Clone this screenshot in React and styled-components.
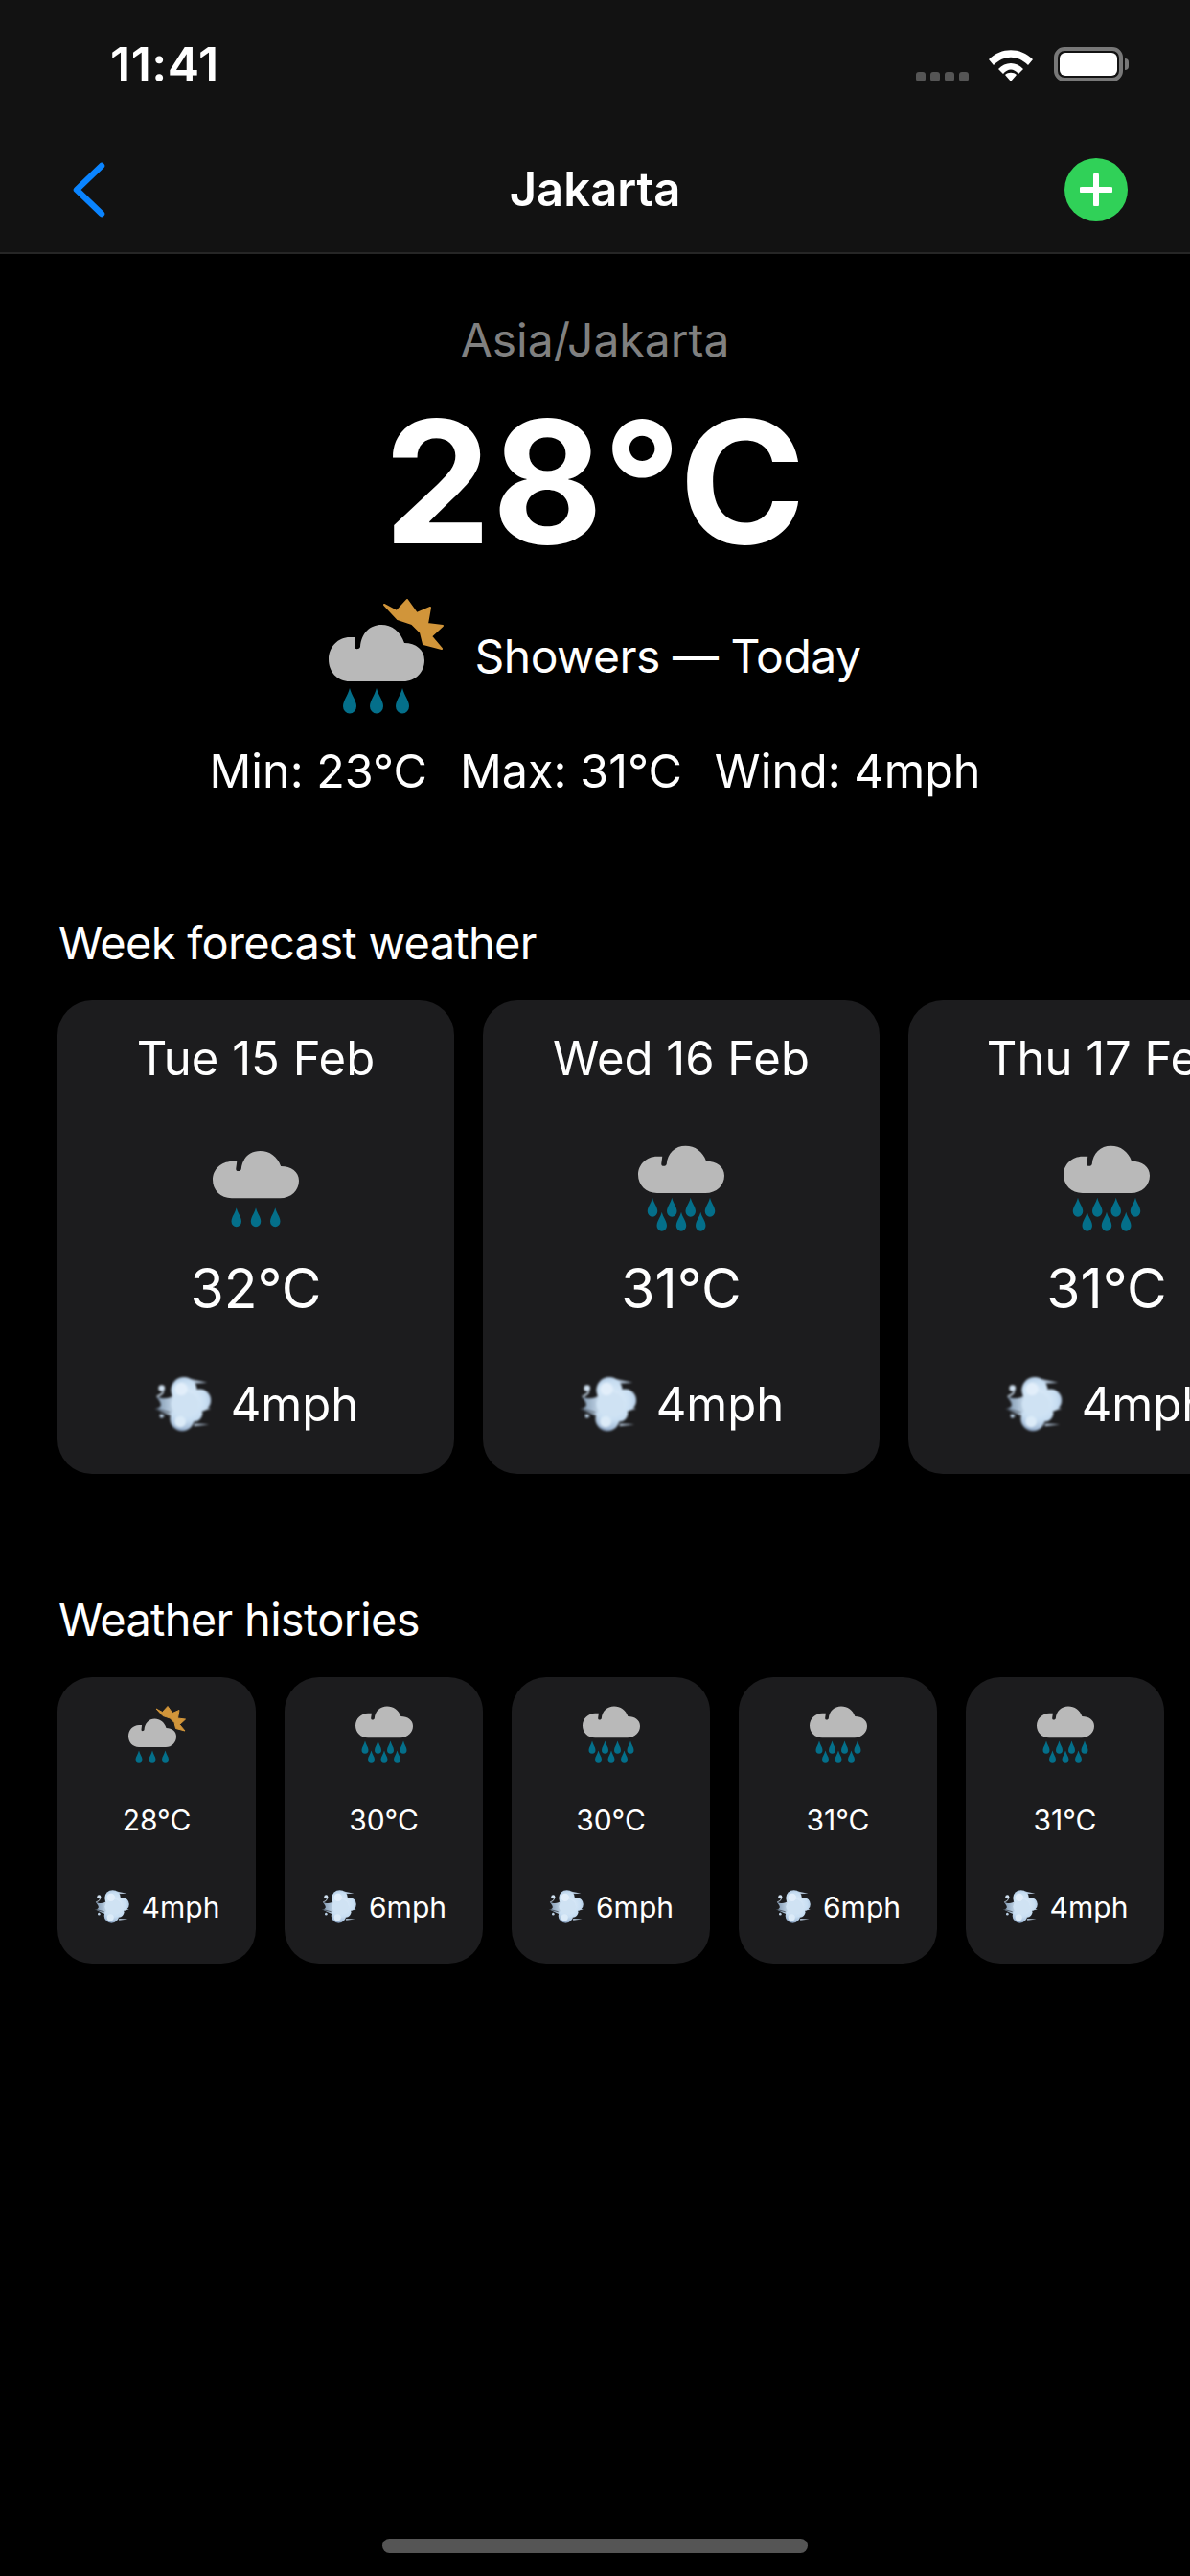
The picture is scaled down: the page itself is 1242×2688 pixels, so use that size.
import React, { useId } from 'react';
import styled, { createGlobalStyle } from 'styled-components';

const FONT = 'Inter, "Noto Sans", "Liberation Sans", sans-serif';

const GlobalStyle = createGlobalStyle`
  html, body {
    margin: 0;
    padding: 0;
    background: #000;
  }
  body {
    font-family: ${FONT};
    color: #fff;
    overflow: hidden;
  }
`;

const Page = styled.div`
  display: flex;
  flex-direction: column;
  width: 1242px;
  height: 2688px;
  overflow: hidden;
  background: #000;
`;

const Header = styled.header`
  background: #121212;
  border-bottom: 2px solid #262626;
`;

const StatusBar = styled.div`
  display: flex;
  align-items: center;
  justify-content: space-between;
  height: 133px;
  padding: 0 64px 0 115px;
  box-sizing: border-box;
`;

const Clock = styled.span`
  font-size: 50px;
  font-weight: 600;
  letter-spacing: 0.5px;
`;

const StatusIcons = styled.div`
  display: flex;
  align-items: flex-end;
`;

const SignalDots = styled.div`
  display: flex;
  gap: 5px;
  margin-right: 20px;
`;

const SignalDot = styled.span`
  width: 10px;
  height: 10px;
  border-radius: 3px;
  background: #555;
`;

const Battery = styled.div`
  display: flex;
  align-items: center;
  margin-left: 21px;
`;

const BatteryBody = styled.div`
  width: 72px;
  height: 36px;
  box-sizing: border-box;
  border: 4px solid #787878;
  border-radius: 11px;
  padding: 2px;
`;

const BatteryFill = styled.div`
  height: 100%;
  border-radius: 6px;
  background: #fff;
`;

const BatteryTip = styled.div`
  width: 4px;
  height: 12px;
  margin-left: 2px;
  border-radius: 0 4px 4px 0;
  background: #787878;
`;

const NavBar = styled.nav`
  display: grid;
  grid-template-columns: 1fr auto 1fr;
  align-items: center;
  height: 130px;
  padding: 0 65px;
`;

const BackIcon = styled.svg`
  display: block;
  margin-left: 9px;
`;

const NavTitle = styled.h1`
  margin: 0;
  font-size: 49px;
  font-weight: 600;
  line-height: 60px;
`;

const AddButton = styled.div`
  justify-self: end;
  display: flex;
  align-items: center;
  justify-content: center;
  width: 66px;
  height: 66px;
  border-radius: 50%;
  background: #30d158;
`;

const Hero = styled.section`
  display: flex;
  flex-direction: column;
  align-items: center;
  padding-top: 60px;
`;

const Zone = styled.div`
  font-size: 48px;
  line-height: 60px;
  color: #808080;
`;

const HeroTemp = styled.div`
  margin-top: 32px;
  font-size: 178px;
  font-weight: 700;
  line-height: 172px;
  letter-spacing: 1px;
`;

const Summary = styled.div`
  display: flex;
  align-items: center;
  gap: 32px;
  margin-top: 36px;
`;

const SummaryText = styled.span`
  font-size: 48px;
  line-height: 60px;
  letter-spacing: -0.5px;
`;

const Stats = styled.div`
  display: flex;
  gap: 34px;
  margin-top: 30px;
  font-size: 48.5px;
  line-height: 60px;
`;

const Section = styled.section`
  margin-top: ${({ $top }) => $top}px;
`;

const SectionTitle = styled.h2`
  margin: 0 0 30px 61px;
  font-size: 47px;
  font-weight: 400;
  line-height: 60px;
  letter-spacing: -0.7px;
`;

const CardRow = styled.div`
  display: flex;
  gap: 30px;
  padding-left: 60px;
`;

const ForecastCard = styled.article`
  flex: 0 0 414px;
  display: flex;
  flex-direction: column;
  align-items: center;
  height: 494px;
  padding-top: 31px;
  box-sizing: border-box;
  border-radius: 36px;
  background: #1c1c1e;
  white-space: nowrap;
`;

const CardDate = styled.div`
  font-size: 49px;
  line-height: 60px;
  margin-bottom: 60px;
`;

const CardTemp = styled.div`
  margin-top: 25px;
  font-size: 57px;
  line-height: 70px;
`;

const WindRow = styled.div`
  display: flex;
  align-items: center;
  gap: ${({ $small }) => ($small ? 12 : 19)}px;
  margin-top: ${({ $small }) => ($small ? 51 : 55)}px;
  font-size: ${({ $small }) => ($small ? 30 : 49)}px;
  line-height: ${({ $small }) => ($small ? 40 : 60)}px;
`;

const HistoryCard = styled.article`
  flex: 0 0 207px;
  display: flex;
  flex-direction: column;
  align-items: center;
  height: 299px;
  padding-top: 30px;
  box-sizing: border-box;
  border-radius: 36px;
  background: #1c1c1e;
`;

const HistoryTemp = styled.div`
  margin-top: 39px;
  font-size: 30px;
  line-height: 40px;
`;

const HomeIndicator = styled.div`
  align-self: center;
  width: 444px;
  height: 15px;
  margin-top: auto;
  margin-bottom: 24px;
  border-radius: 8px;
  background: #555;
`;

const IconSvg = styled.svg`
  display: block;
  flex: none;
  width: ${({ $size }) => $size}px;
  height: ${({ $size }) => $size}px;
`;

const CLOUD =
  'M22 60C9 60 0 50 0 37C0 24 10 14 22 14L28 14C28 16 27 22 27 24C27 27 32 27 33 24C34 10 43 1 55 1C66 1 75 8 79 20C91 20 100 27 100 38C100 50 91 60 78 60Z';
const DROP = 'M0 0C2 8 7 13 7 19A7 7.5 0 0 1-7 19C-7 13-2 8 0 0Z';
const SUN = '58,6 71,13 82,1 92,15 106,9 103,26 119,28 107,39 118,52 99,47 96,35 87,26 72,21';

const ICONS = {
  sunRain: {
    sun: true,
    cloud: 'translate(0 26)',
    drops: [[22, 93], [50, 93], [77, 93]],
  },
  rain: {
    cloud: 'translate(0 7) scale(1.2 1.11)',
    drops: [[33, 87], [60, 87], [87, 87]],
  },
  heavyRain: {
    cloud: 'scale(1.2 1.11)',
    drops: [[20, 73], [47, 73], [73, 73], [100, 73], [33, 93], [60, 93], [87, 93]],
  },
};

const WeatherIcon = ({ kind, size }) => {
  const { sun, cloud, drops } = ICONS[kind];
  return (
    <IconSvg $size={size} viewBox="0 0 120 120">
      {sun && <polygon points={SUN} fill="#d1953a" stroke="#d1953a" strokeWidth="2" strokeLinejoin="round" />}
      <path d={CLOUD} transform={cloud} fill="#b9b9b9" />
      {drops.map(([x, y]) => (
        <path key={`${x}-${y}`} d={DROP} transform={`translate(${x} ${y})`} fill="#046f8a" />
      ))}
    </IconSvg>
  );
};

// soft puff of air, every lobe shares one gradient so they melt together
const WindIcon = ({ size }) => {
  const id = useId();
  const puff = `url(#${id}puff)`;
  return (
    <IconSvg $size={size} viewBox="12 16 64 64">
      <defs>
        <radialGradient id={`${id}puff`} gradientUnits="userSpaceOnUse" cx="48" cy="44" r="34">
          <stop offset="0%" stopColor="#e3effa" />
          <stop offset="62%" stopColor="#c8def2" />
          <stop offset="86%" stopColor="#a5bdd8" />
          <stop offset="100%" stopColor="#6e86a6" />
        </radialGradient>
        <linearGradient id={`${id}fan`} gradientUnits="userSpaceOnUse" x1="15" y1="0" x2="38" y2="0">
          <stop offset="0%" stopColor="#7e95ae" />
          <stop offset="100%" stopColor="#cfe2f3" />
        </linearGradient>
        <filter id={`${id}soft`} x="-20%" y="-20%" width="140%" height="140%">
          <feGaussianBlur stdDeviation="0.9" />
        </filter>
      </defs>
      <g filter={`url(#${id}soft)`}>
        <path d="M52 20L70 24L54 25ZM56 68L72 69L56 71ZM66 50L74 52L66 54Z" fill="#aebfd2" />
        <path d="M15 39C24 43 30 41 36 36L38 62C30 60 24 56 14 52C22 51 22 47 15 39Z" fill={`url(#${id}fan)`} />
        <circle cx="45" cy="32" r="14" fill={puff} />
        <circle cx="43" cy="63" r="13" fill={puff} />
        <circle cx="62" cy="43" r="12" fill={puff} />
        <circle cx="56" cy="57" r="9" fill={puff} />
        <ellipse cx="46" cy="47" rx="15" ry="13" fill="#cfe2f3" />
        <circle cx="42" cy="31" r="7" fill="#e2eefa" />
        <circle cx="41" cy="66" r="6" fill="#dcebf8" />
        <circle cx="21" cy="30" r="3.4" fill="#cfe0f0" />
        <path d="M23 33C22 37 19 38 16 39" stroke="#cfe0f0" strokeWidth="1.6" fill="none" />
        <path d="M15 52L30 56M18 58L28 60" stroke="#1c1c1e" strokeWidth="1" fill="none" />
        <circle cx="21" cy="60" r="2.2" fill="#b9cfe4" />
      </g>
    </IconSvg>
  );
};

const WEEK = [
  { date: 'Tue 15 Feb', kind: 'rain', temp: '32°C', wind: '4mph' },
  { date: 'Wed 16 Feb', kind: 'heavyRain', temp: '31°C', wind: '4mph' },
  { date: 'Thu 17 Feb', kind: 'heavyRain', temp: '31°C', wind: '4mph' },
];

const HISTORY = [
  { kind: 'sunRain', temp: '28°C', wind: '4mph' },
  { kind: 'heavyRain', temp: '30°C', wind: '6mph' },
  { kind: 'heavyRain', temp: '30°C', wind: '6mph' },
  { kind: 'heavyRain', temp: '31°C', wind: '6mph' },
  { kind: 'heavyRain', temp: '31°C', wind: '4mph' },
];

const App = () => (
  <Page>
    <GlobalStyle />
    <Header>
      <StatusBar>
        <Clock>11:41</Clock>
        <StatusIcons>
          <SignalDots>
            <SignalDot />
            <SignalDot />
            <SignalDot />
            <SignalDot />
          </SignalDots>
          <svg width="48" height="36" viewBox="0 0 48 36">
            <path d="M1 13C14 0 34 0 47 13L42 19C31 8 17 8 6 19Z" fill="#fff" />
            <path d="M11 23C18 15 30 15 37 23L32 28C27 22 21 22 16 28Z" fill="#fff" />
            <path d="M18 29C21 26 27 26 30 29L24 36Z" fill="#fff" />
          </svg>
          <Battery>
            <BatteryBody>
              <BatteryFill />
            </BatteryBody>
            <BatteryTip />
          </Battery>
        </StatusIcons>
      </StatusBar>
      <NavBar>
        <BackIcon width="38" height="60" viewBox="0 0 38 60">
          <path d="M32 5L6 30L32 55" stroke="#0a84ff" strokeWidth="6.5" strokeLinecap="round" strokeLinejoin="round" fill="none" />
        </BackIcon>
        <NavTitle>Jakarta</NavTitle>
        <AddButton>
          <svg width="34" height="34" viewBox="0 0 34 34">
            <path d="M17 2V32M2 17H32" stroke="#fff" strokeWidth="6" strokeLinecap="round" />
          </svg>
        </AddButton>
      </NavBar>
    </Header>

    <Hero>
      <Zone>Asia/Jakarta</Zone>
      <HeroTemp>28°C</HeroTemp>
      <Summary>
        <WeatherIcon kind="sunRain" size={120} />
        <SummaryText>Showers — Today</SummaryText>
      </Summary>
      <Stats>
        <span>Min: 23°C</span>
        <span>Max: 31°C</span>
        <span>Wind: 4mph</span>
      </Stats>
    </Hero>

    <Section $top={119}>
      <SectionTitle>Week forecast weather</SectionTitle>
      <CardRow>
        {WEEK.map((day) => (
          <ForecastCard key={day.date}>
            <CardDate>{day.date}</CardDate>
            <WeatherIcon kind={day.kind} size={90} />
            <CardTemp>{day.temp}</CardTemp>
            <WindRow>
              <WindIcon size={62} />
              {day.wind}
            </WindRow>
          </ForecastCard>
        ))}
      </CardRow>
    </Section>

    <Section $top={122}>
      <SectionTitle>Weather histories</SectionTitle>
      <CardRow>
        {HISTORY.map((entry, index) => (
          <HistoryCard key={index}>
            <WeatherIcon kind={entry.kind} size={60} />
            <HistoryTemp>{entry.temp}</HistoryTemp>
            <WindRow $small>
              <WindIcon size={38} />
              {entry.wind}
            </WindRow>
          </HistoryCard>
        ))}
      </CardRow>
    </Section>

    <HomeIndicator />
  </Page>
);

export default App;
